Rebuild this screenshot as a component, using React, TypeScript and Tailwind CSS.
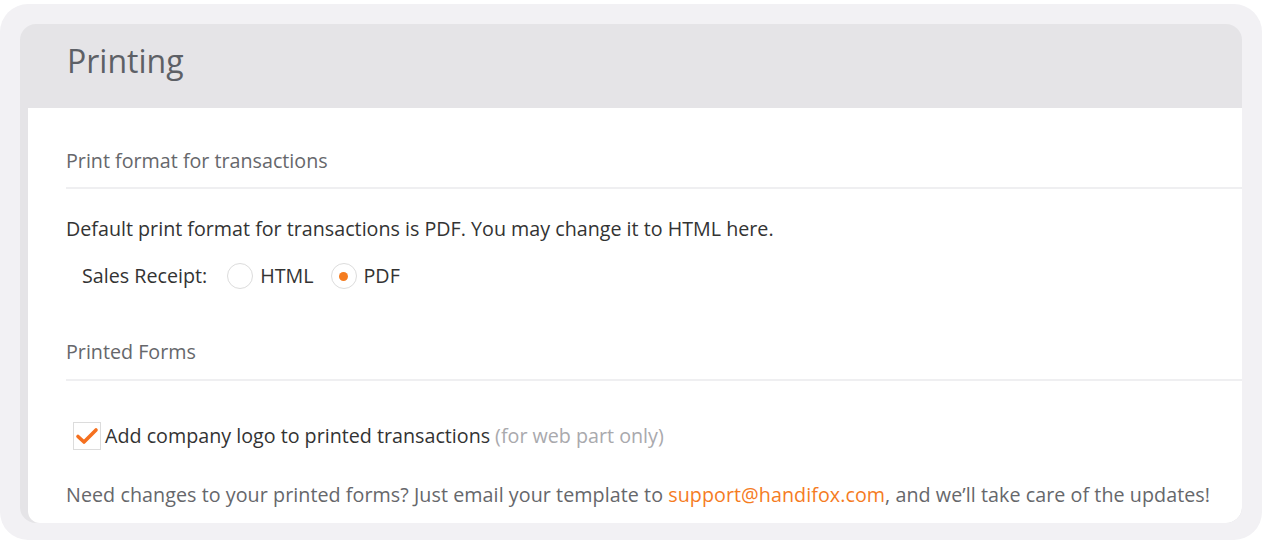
import React from 'react';

function Radio({ checked }: { checked?: boolean }) {
  return (
    <span className="w-[26px] h-[26px] rounded-full border border-[#dcdcdc] bg-white flex items-center justify-center shrink-0">
      {checked && <span className="w-[9px] h-[9px] rounded-full bg-[#f57c1f]" />}
    </span>
  );
}

export default function App() {
  return (
    <div className="w-[1266px] h-[542px] bg-white font-['Open_Sans',sans-serif]">
      <div className="ml-0 mt-[4px] w-[1262px] h-[536px] rounded-[28px] bg-[#f2f1f4] pt-[20px] pl-[20px]">
        <div className="w-[1222px] h-[499px] rounded-[16px] bg-[#e5e4e7] flex flex-col overflow-hidden">
          <div className="h-[84px] shrink-0 flex items-center pl-[47px] pb-[10px]">
            <h1 className="text-[32px] text-[#5d6066]">Printing</h1>
          </div>
          <div className="flex-1 ml-[8px] bg-white rounded-br-[16px] rounded-bl-[12px] pl-[38px] pt-[40px]">
            <div className="text-[19.7px] text-[#66676b] leading-[26px]">Print format for transactions</div>
            <div className="mt-[13px] h-[2px] bg-[#efeff1]" />
            <p className="mt-[27px] text-[19.7px] text-[#333333] leading-[26px]">
              Default print format for transactions is PDF. You may change it to HTML here.
            </p>
            <div className="mt-[21px] pl-[16px] flex items-center text-[19.7px] text-[#333333] leading-[26px]">
              <span className="mr-[20px]">Sales Receipt:</span>
              <Radio />
              <span className="ml-[7px] mr-[17px]">HTML</span>
              <Radio checked />
              <span className="ml-[7px]">PDF</span>
            </div>
            <div className="mt-[50px] text-[19.7px] text-[#66676b] leading-[26px]">Printed Forms</div>
            <div className="mt-[14px] h-[2px] bg-[#efeff1]" />
            <div className="mt-[41px] pl-[7px] flex items-center text-[19.7px] leading-[26px]">
              <span className="w-[28px] h-[28px] border border-[#dcdcdc] bg-white flex items-center justify-center shrink-0">
                <svg width="24" height="20" viewBox="0 0 24 20" fill="none">
                  <path d="M3 10.5 L9 16 L21 4" stroke="#f5701f" strokeWidth="3.6" strokeLinecap="round" strokeLinejoin="round" />
                </svg>
              </span>
              <span className="ml-[4px] text-[#333333]">Add company logo to printed transactions</span>
              <span className="ml-[5px] text-[#a9a9ad]">(for web part only)</span>
            </div>
            <p className="mt-[32px] text-[19.7px] text-[#66676b] leading-[26px] tracking-[0.06px]">
              Need changes to your printed forms? Just email your template to{' '}
              <span className="text-[#f57c1f]">support@handifox.com</span>, and we’ll take care of the updates!
            </p>
          </div>
        </div>
      </div>
    </div>
  );
}
